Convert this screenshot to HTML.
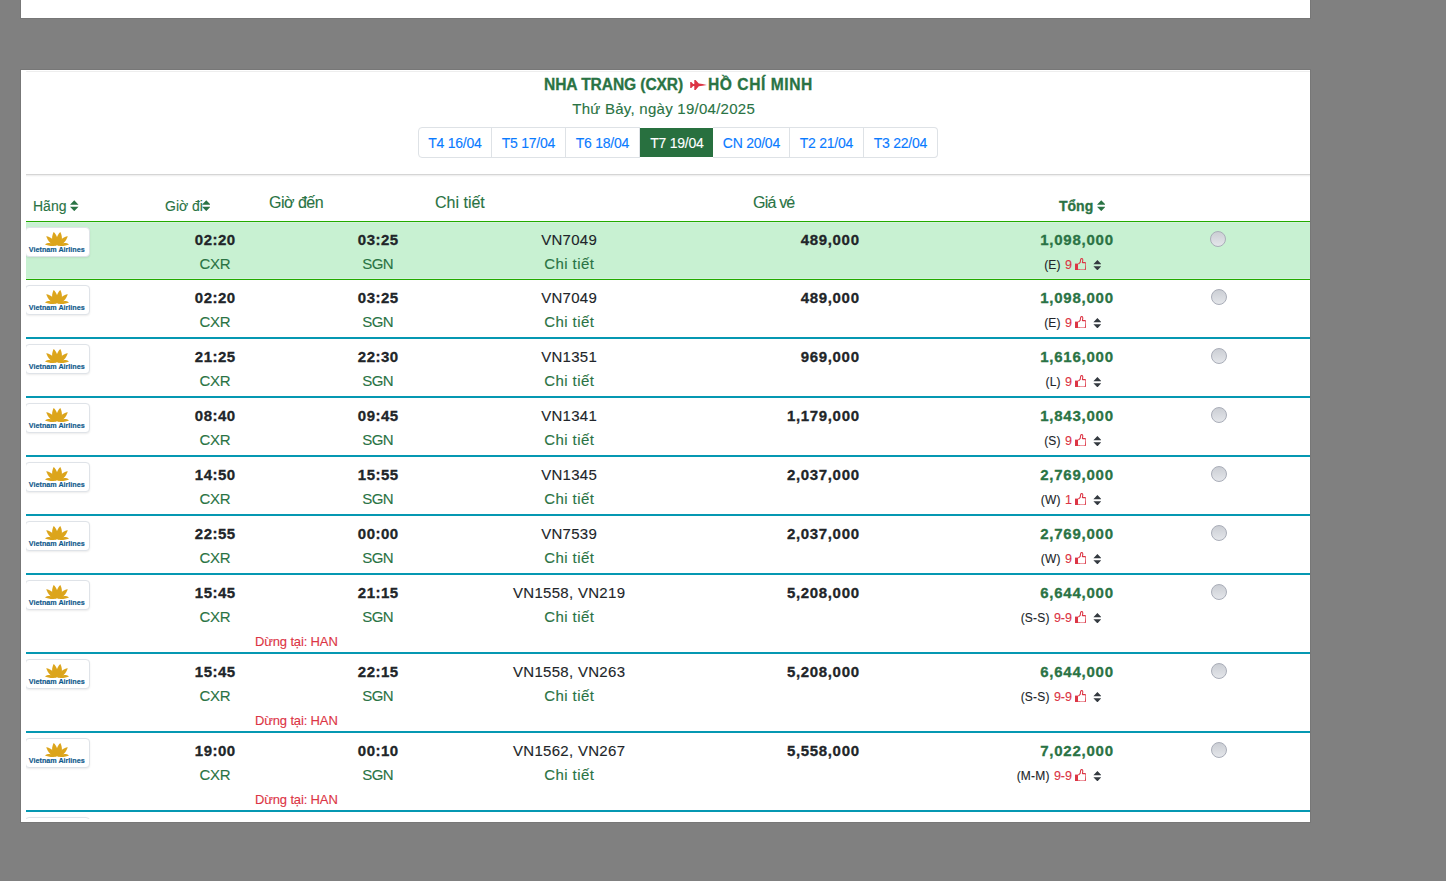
<!DOCTYPE html>
<html><head><meta charset="utf-8"><style>
html,body{margin:0;padding:0}
body{width:1446px;height:881px;background:#808080;position:relative;overflow:hidden;font-family:'Liberation Sans', sans-serif}
.t{position:absolute;white-space:nowrap}
.b{-webkit-text-stroke:0.3px currentColor}
.r{-webkit-text-stroke:0.12px currentColor}
.i{position:absolute;display:block}
.box{position:absolute;background:#fff;box-shadow:0 0 0 1px rgba(0,0,0,.07)}
.clip{position:absolute;left:21px;top:70px;width:1289px;height:752px;overflow:hidden;background:#fff}
.inner{position:absolute;left:-21px;top:-70px;width:1446px;height:881px}
.logo{position:absolute;background:#fff;border:1px solid #dfe3e8;border-radius:4px;box-shadow:0 1px 2px rgba(0,0,0,.08)}
.vna{position:absolute;left:1.3px;top:17.8px;width:59px;text-align:center;font-size:7.2px;line-height:8px;font-weight:bold;color:#0f5a8c;white-space:nowrap;letter-spacing:0px;-webkit-text-stroke:0.15px #0f5a8c}
.radio{position:absolute;width:14px;height:14px;border:1px solid #a9adb8;border-radius:50%;background:linear-gradient(#cbced4,#e4e6ea)}
.tab{position:absolute;top:127px;height:29px;border:1px solid #dee2e6;border-left:none;font-size:14px;line-height:28px;color:#0a7bff;text-align:center;white-space:nowrap}
</style></head><body>
<div class="box" style="left:21px;top:0;width:1289px;height:18px"></div>
<div class="box" style="left:21px;top:70px;width:1289px;height:752px"></div>
<div class="clip"><div class="inner">
<div style="position:absolute;left:26px;top:71px;width:1300px;height:1px;background:#eeeeee;border-radius:2px 0 0 0"></div>
<div style="position:absolute;left:26px;top:174px;width:1300px;height:1px;background:#d5d5d5"></div>
<div style="position:absolute;left:26px;top:175px;width:1300px;height:1px;background:#f0f0f0"></div>
<div style="position:absolute;left:26px;top:176px;width:1300px;height:1px;background:#fafafa"></div>
<div class="t b" style="left:544px;top:74.89px;font-size:15.6px;line-height:19px;color:#2a7344;font-weight:bold;letter-spacing:-0.1px;">NHA TRANG (CXR)</div>
<svg class="i" style="left:690px;top:80px" width="17" height="10" viewBox="0 0 17 10"><path d="M0.2 2 L1.3 2 L3.2 4.1 L4.3 4.1 L4.3 0 L5.6 0 L8.8 3.6 L12.5 4.1 L16.8 4.9 L12.5 5.8 L8.8 6.3 L5.6 10 L4.3 10 L4.3 5.9 L3.2 5.9 L1.3 8 L0.2 8 Z" fill="#dc3545"/></svg>
<div class="t b" style="left:708px;top:74.89px;font-size:15.6px;line-height:19px;color:#2a7344;font-weight:bold;letter-spacing:0.55px;">HỒ CHÍ MINH</div>
<div class="t r" style="left:363.63px;width:600px;text-align:center;top:99.60px;font-size:15px;line-height:18px;color:#2a7344;font-weight:normal;letter-spacing:0.26px;">Thứ Bảy, ngày 19/04/2025</div>
<div class="tab" style="left:418px;width:72px;border-left:1px solid #dee2e6;border-radius:4px 0 0 4px;"></div>
<div class="t r" style="left:154.88px;width:600px;text-align:center;top:134.65px;font-size:14px;line-height:17px;color:#0a7bff;font-weight:normal;letter-spacing:-0.25px;">T4 16/04</div>
<div class="tab" style="left:491px;width:74px;"></div>
<div class="t r" style="left:228.38px;width:600px;text-align:center;top:134.65px;font-size:14px;line-height:17px;color:#0a7bff;font-weight:normal;letter-spacing:-0.25px;">T5 17/04</div>
<div class="tab" style="left:565px;width:74px;"></div>
<div class="t r" style="left:302.38px;width:600px;text-align:center;top:134.65px;font-size:14px;line-height:17px;color:#0a7bff;font-weight:normal;letter-spacing:-0.25px;">T6 18/04</div>
<div class="tab" style="left:639px;width:74px;background:#28703f;border-color:#28703f;color:#fff;top:128px;height:29px;border:none;width:73px;left:640px;line-height:29px"></div>
<div class="t r" style="left:376.88px;width:600px;text-align:center;top:134.65px;font-size:14px;line-height:17px;color:#fff;font-weight:normal;letter-spacing:-0.25px;">T7 19/04</div>
<div class="tab" style="left:713px;width:76px;"></div>
<div class="t r" style="left:451.38px;width:600px;text-align:center;top:134.65px;font-size:14px;line-height:17px;color:#0a7bff;font-weight:normal;letter-spacing:-0.25px;">CN 20/04</div>
<div class="tab" style="left:789px;width:74px;"></div>
<div class="t r" style="left:526.38px;width:600px;text-align:center;top:134.65px;font-size:14px;line-height:17px;color:#0a7bff;font-weight:normal;letter-spacing:-0.25px;">T2 21/04</div>
<div class="tab" style="left:863px;width:74px;border-radius:0 4px 4px 0;"></div>
<div class="t r" style="left:600.38px;width:600px;text-align:center;top:134.65px;font-size:14px;line-height:17px;color:#0a7bff;font-weight:normal;letter-spacing:-0.25px;">T3 22/04</div>
<div class="t r" style="left:33px;top:198.05px;font-size:14px;line-height:17px;color:#2a7344;font-weight:normal;letter-spacing:0px;">Hãng</div>
<svg class="i" style="left:70px;top:200.2px" width="8.5" height="11.3" viewBox="0 0 17 22"><path d="M8.5 0 L17 9 L0 9 Z M0 13 L17 13 L8.5 22 Z" fill="#2a7344"/></svg>
<div class="t r" style="left:165px;top:198.05px;font-size:14px;line-height:17px;color:#2a7344;font-weight:normal;letter-spacing:0px;">Giờ đi</div>
<svg class="i" style="left:201.5px;top:200.2px" width="8.5" height="11.3" viewBox="0 0 17 22"><path d="M8.5 0 L17 9 L0 9 Z M0 13 L17 13 L8.5 22 Z" fill="#2a7344"/></svg>
<div class="t r" style="left:269px;top:192.86px;font-size:16px;line-height:19px;color:#2a7344;font-weight:normal;letter-spacing:-0.5px;">Giờ đến</div>
<div class="t r" style="left:435px;top:192.86px;font-size:16px;line-height:19px;color:#2a7344;font-weight:normal;letter-spacing:0px;">Chi tiết</div>
<div class="t r" style="left:753px;top:192.86px;font-size:16px;line-height:19px;color:#2a7344;font-weight:normal;letter-spacing:-0.8px;">Giá vé</div>
<div class="t b" style="left:1059px;top:198.05px;font-size:14px;line-height:17px;color:#2a7344;font-weight:bold;letter-spacing:0px;">Tổng</div>
<svg class="i" style="left:1096.5px;top:200.2px" width="8.5" height="11.3" viewBox="0 0 17 22"><path d="M8.5 0 L17 9 L0 9 Z M0 13 L17 13 L8.5 22 Z" fill="#2a7344"/></svg>
<div style="position:absolute;left:26px;top:177px;width:1284px;height:642px;overflow:hidden"><div style="position:absolute;left:-26px;top:-177px;width:1446px;height:881px">
<div style="position:absolute;left:26px;top:221px;width:1300px;height:57px;background:#c8f1d2;border-top:1px solid #22aa00;border-bottom:1px solid #22aa00;box-shadow:inset 0 1px 0 rgba(255,255,255,.2), inset 0 -1px 0 rgba(255,255,255,.2)"></div>
<div class="logo" style="left:25px;top:227px;width:63px;height:28px"><svg class="i" style="left:19px;top:4px" width="24" height="14" viewBox="0 0 24 14"><g fill="#dca51c"><path d="M12 13.6 C6.8 12.5 5.8 6 8.6 0 C11.8 2.5 13.8 8 12 13.6Z"/><path d="M12 13.6 C17.2 12.5 18.2 6 15.4 0 C12.2 2.5 10.2 8 12 13.6Z"/><path d="M11 13.6 C6 13.2 3 9 1.2 4.3 C6 5 9.5 8 11 13.6Z"/><path d="M13 13.6 C18 13.2 21 9 22.8 4.3 C18 5 14.5 8 13 13.6Z"/><path d="M11.5 13.8 C6 14.2 2 13.5 0 12.4 C3 10.2 8.5 10.8 11.5 13.8Z"/><path d="M12.5 13.8 C18 14.2 22 13.5 24 12.4 C21 10.2 15.5 10.8 12.5 13.8Z"/></g></svg><div class="vna">Vietnam Airlines</div></div>
<div class="t b" style="left:-84.75px;width:600px;text-align:center;top:230.80px;font-size:15px;line-height:18px;color:#212529;font-weight:bold;letter-spacing:0.5px;">02:20</div>
<div class="t r" style="left:-85.15px;width:600px;text-align:center;top:254.80px;font-size:15px;line-height:18px;color:#2a7344;font-weight:normal;letter-spacing:-0.3px;">CXR</div>
<div class="t b" style="left:78.25px;width:600px;text-align:center;top:230.80px;font-size:15px;line-height:18px;color:#212529;font-weight:bold;letter-spacing:0.5px;">03:25</div>
<div class="t r" style="left:77.70px;width:600px;text-align:center;top:254.80px;font-size:15px;line-height:18px;color:#2a7344;font-weight:normal;letter-spacing:-0.6px;">SGN</div>
<div class="t r" style="left:269.15px;width:600px;text-align:center;top:230.80px;font-size:15px;line-height:18px;color:#212529;font-weight:normal;letter-spacing:0.3px;">VN7049</div>
<div class="t r" style="left:269.21px;width:600px;text-align:center;top:254.80px;font-size:15px;line-height:18px;color:#2a7344;font-weight:normal;letter-spacing:0.43px;">Chi tiết</div>
<div class="t b" style="left:259.67px;width:600px;text-align:right;top:230.80px;font-size:15px;line-height:18px;color:#212529;font-weight:bold;letter-spacing:0.67px;">489,000</div>
<div class="t b" style="left:513.75px;width:600px;text-align:right;top:230.80px;font-size:15px;line-height:18px;color:#2a7344;font-weight:bold;letter-spacing:0.75px;">1,098,000</div>
<svg class="i" style="left:1092.6px;top:259.8px" width="8.8" height="10.4" viewBox="0 0 17 22"><path d="M8.5 0 L17 9 L0 9 Z M0 13 L17 13 L8.5 22 Z" fill="#343a40"/></svg>
<svg class="i" style="left:1074.8px;top:257.8px" width="11.5" height="12.5" viewBox="0 0 11.5 12.5"><path d="M0 5.6 L3 5.6 L3 12 L0 12 Z" fill="#dc3545"/><path d="M3.4 6 L5.2 4.3 L5.6 1.6 Q5.9 0.5 6.8 0.55 Q7.9 0.7 7.8 2.2 L7.4 4.6 L9.8 4.6 Q11 4.7 10.95 6 L10.6 10.8 Q10.4 11.95 9.3 11.95 L4.6 11.95 L3.4 11.3" fill="none" stroke="#dc3545" stroke-width="1.05" stroke-linejoin="round"/></svg>
<div class="t r" style="left:472.00px;width:600px;text-align:right;top:258.17px;font-size:12.5px;line-height:15px;color:#dc3545;font-weight:normal;letter-spacing:0px;"><span style="font-size:12px;letter-spacing:0.2px;color:#212529;margin-right:4.3px">(E)</span>9</div>
<div class="radio" style="left:1210px;top:231px"></div>
<div style="position:absolute;left:26px;top:337px;width:1300px;height:2px;background:#0598b2"></div>
<div class="logo" style="left:25px;top:285px;width:63px;height:28px"><svg class="i" style="left:19px;top:4px" width="24" height="14" viewBox="0 0 24 14"><g fill="#dca51c"><path d="M12 13.6 C6.8 12.5 5.8 6 8.6 0 C11.8 2.5 13.8 8 12 13.6Z"/><path d="M12 13.6 C17.2 12.5 18.2 6 15.4 0 C12.2 2.5 10.2 8 12 13.6Z"/><path d="M11 13.6 C6 13.2 3 9 1.2 4.3 C6 5 9.5 8 11 13.6Z"/><path d="M13 13.6 C18 13.2 21 9 22.8 4.3 C18 5 14.5 8 13 13.6Z"/><path d="M11.5 13.8 C6 14.2 2 13.5 0 12.4 C3 10.2 8.5 10.8 11.5 13.8Z"/><path d="M12.5 13.8 C18 14.2 22 13.5 24 12.4 C21 10.2 15.5 10.8 12.5 13.8Z"/></g></svg><div class="vna">Vietnam Airlines</div></div>
<div class="t b" style="left:-84.75px;width:600px;text-align:center;top:288.80px;font-size:15px;line-height:18px;color:#212529;font-weight:bold;letter-spacing:0.5px;">02:20</div>
<div class="t r" style="left:-85.15px;width:600px;text-align:center;top:312.80px;font-size:15px;line-height:18px;color:#2a7344;font-weight:normal;letter-spacing:-0.3px;">CXR</div>
<div class="t b" style="left:78.25px;width:600px;text-align:center;top:288.80px;font-size:15px;line-height:18px;color:#212529;font-weight:bold;letter-spacing:0.5px;">03:25</div>
<div class="t r" style="left:77.70px;width:600px;text-align:center;top:312.80px;font-size:15px;line-height:18px;color:#2a7344;font-weight:normal;letter-spacing:-0.6px;">SGN</div>
<div class="t r" style="left:269.15px;width:600px;text-align:center;top:288.80px;font-size:15px;line-height:18px;color:#212529;font-weight:normal;letter-spacing:0.3px;">VN7049</div>
<div class="t r" style="left:269.21px;width:600px;text-align:center;top:312.80px;font-size:15px;line-height:18px;color:#2a7344;font-weight:normal;letter-spacing:0.43px;">Chi tiết</div>
<div class="t b" style="left:259.67px;width:600px;text-align:right;top:288.80px;font-size:15px;line-height:18px;color:#212529;font-weight:bold;letter-spacing:0.67px;">489,000</div>
<div class="t b" style="left:513.75px;width:600px;text-align:right;top:288.80px;font-size:15px;line-height:18px;color:#2a7344;font-weight:bold;letter-spacing:0.75px;">1,098,000</div>
<svg class="i" style="left:1092.6px;top:317.8px" width="8.8" height="10.4" viewBox="0 0 17 22"><path d="M8.5 0 L17 9 L0 9 Z M0 13 L17 13 L8.5 22 Z" fill="#343a40"/></svg>
<svg class="i" style="left:1074.8px;top:315.8px" width="11.5" height="12.5" viewBox="0 0 11.5 12.5"><path d="M0 5.6 L3 5.6 L3 12 L0 12 Z" fill="#dc3545"/><path d="M3.4 6 L5.2 4.3 L5.6 1.6 Q5.9 0.5 6.8 0.55 Q7.9 0.7 7.8 2.2 L7.4 4.6 L9.8 4.6 Q11 4.7 10.95 6 L10.6 10.8 Q10.4 11.95 9.3 11.95 L4.6 11.95 L3.4 11.3" fill="none" stroke="#dc3545" stroke-width="1.05" stroke-linejoin="round"/></svg>
<div class="t r" style="left:472.00px;width:600px;text-align:right;top:316.17px;font-size:12.5px;line-height:15px;color:#dc3545;font-weight:normal;letter-spacing:0px;"><span style="font-size:12px;letter-spacing:0.2px;color:#212529;margin-right:4.3px">(E)</span>9</div>
<div class="radio" style="left:1211px;top:289px"></div>
<div style="position:absolute;left:26px;top:396px;width:1300px;height:2px;background:#0598b2"></div>
<div class="logo" style="left:25px;top:344px;width:63px;height:28px"><svg class="i" style="left:19px;top:4px" width="24" height="14" viewBox="0 0 24 14"><g fill="#dca51c"><path d="M12 13.6 C6.8 12.5 5.8 6 8.6 0 C11.8 2.5 13.8 8 12 13.6Z"/><path d="M12 13.6 C17.2 12.5 18.2 6 15.4 0 C12.2 2.5 10.2 8 12 13.6Z"/><path d="M11 13.6 C6 13.2 3 9 1.2 4.3 C6 5 9.5 8 11 13.6Z"/><path d="M13 13.6 C18 13.2 21 9 22.8 4.3 C18 5 14.5 8 13 13.6Z"/><path d="M11.5 13.8 C6 14.2 2 13.5 0 12.4 C3 10.2 8.5 10.8 11.5 13.8Z"/><path d="M12.5 13.8 C18 14.2 22 13.5 24 12.4 C21 10.2 15.5 10.8 12.5 13.8Z"/></g></svg><div class="vna">Vietnam Airlines</div></div>
<div class="t b" style="left:-84.75px;width:600px;text-align:center;top:347.80px;font-size:15px;line-height:18px;color:#212529;font-weight:bold;letter-spacing:0.5px;">21:25</div>
<div class="t r" style="left:-85.15px;width:600px;text-align:center;top:371.80px;font-size:15px;line-height:18px;color:#2a7344;font-weight:normal;letter-spacing:-0.3px;">CXR</div>
<div class="t b" style="left:78.25px;width:600px;text-align:center;top:347.80px;font-size:15px;line-height:18px;color:#212529;font-weight:bold;letter-spacing:0.5px;">22:30</div>
<div class="t r" style="left:77.70px;width:600px;text-align:center;top:371.80px;font-size:15px;line-height:18px;color:#2a7344;font-weight:normal;letter-spacing:-0.6px;">SGN</div>
<div class="t r" style="left:269.15px;width:600px;text-align:center;top:347.80px;font-size:15px;line-height:18px;color:#212529;font-weight:normal;letter-spacing:0.3px;">VN1351</div>
<div class="t r" style="left:269.21px;width:600px;text-align:center;top:371.80px;font-size:15px;line-height:18px;color:#2a7344;font-weight:normal;letter-spacing:0.43px;">Chi tiết</div>
<div class="t b" style="left:259.67px;width:600px;text-align:right;top:347.80px;font-size:15px;line-height:18px;color:#212529;font-weight:bold;letter-spacing:0.67px;">969,000</div>
<div class="t b" style="left:513.75px;width:600px;text-align:right;top:347.80px;font-size:15px;line-height:18px;color:#2a7344;font-weight:bold;letter-spacing:0.75px;">1,616,000</div>
<svg class="i" style="left:1092.6px;top:376.8px" width="8.8" height="10.4" viewBox="0 0 17 22"><path d="M8.5 0 L17 9 L0 9 Z M0 13 L17 13 L8.5 22 Z" fill="#343a40"/></svg>
<svg class="i" style="left:1074.8px;top:374.8px" width="11.5" height="12.5" viewBox="0 0 11.5 12.5"><path d="M0 5.6 L3 5.6 L3 12 L0 12 Z" fill="#dc3545"/><path d="M3.4 6 L5.2 4.3 L5.6 1.6 Q5.9 0.5 6.8 0.55 Q7.9 0.7 7.8 2.2 L7.4 4.6 L9.8 4.6 Q11 4.7 10.95 6 L10.6 10.8 Q10.4 11.95 9.3 11.95 L4.6 11.95 L3.4 11.3" fill="none" stroke="#dc3545" stroke-width="1.05" stroke-linejoin="round"/></svg>
<div class="t r" style="left:472.00px;width:600px;text-align:right;top:375.17px;font-size:12.5px;line-height:15px;color:#dc3545;font-weight:normal;letter-spacing:0px;"><span style="font-size:12px;letter-spacing:0.2px;color:#212529;margin-right:4.3px">(L)</span>9</div>
<div class="radio" style="left:1211px;top:348px"></div>
<div style="position:absolute;left:26px;top:455px;width:1300px;height:2px;background:#0598b2"></div>
<div class="logo" style="left:25px;top:403px;width:63px;height:28px"><svg class="i" style="left:19px;top:4px" width="24" height="14" viewBox="0 0 24 14"><g fill="#dca51c"><path d="M12 13.6 C6.8 12.5 5.8 6 8.6 0 C11.8 2.5 13.8 8 12 13.6Z"/><path d="M12 13.6 C17.2 12.5 18.2 6 15.4 0 C12.2 2.5 10.2 8 12 13.6Z"/><path d="M11 13.6 C6 13.2 3 9 1.2 4.3 C6 5 9.5 8 11 13.6Z"/><path d="M13 13.6 C18 13.2 21 9 22.8 4.3 C18 5 14.5 8 13 13.6Z"/><path d="M11.5 13.8 C6 14.2 2 13.5 0 12.4 C3 10.2 8.5 10.8 11.5 13.8Z"/><path d="M12.5 13.8 C18 14.2 22 13.5 24 12.4 C21 10.2 15.5 10.8 12.5 13.8Z"/></g></svg><div class="vna">Vietnam Airlines</div></div>
<div class="t b" style="left:-84.75px;width:600px;text-align:center;top:406.80px;font-size:15px;line-height:18px;color:#212529;font-weight:bold;letter-spacing:0.5px;">08:40</div>
<div class="t r" style="left:-85.15px;width:600px;text-align:center;top:430.80px;font-size:15px;line-height:18px;color:#2a7344;font-weight:normal;letter-spacing:-0.3px;">CXR</div>
<div class="t b" style="left:78.25px;width:600px;text-align:center;top:406.80px;font-size:15px;line-height:18px;color:#212529;font-weight:bold;letter-spacing:0.5px;">09:45</div>
<div class="t r" style="left:77.70px;width:600px;text-align:center;top:430.80px;font-size:15px;line-height:18px;color:#2a7344;font-weight:normal;letter-spacing:-0.6px;">SGN</div>
<div class="t r" style="left:269.15px;width:600px;text-align:center;top:406.80px;font-size:15px;line-height:18px;color:#212529;font-weight:normal;letter-spacing:0.3px;">VN1341</div>
<div class="t r" style="left:269.21px;width:600px;text-align:center;top:430.80px;font-size:15px;line-height:18px;color:#2a7344;font-weight:normal;letter-spacing:0.43px;">Chi tiết</div>
<div class="t b" style="left:259.67px;width:600px;text-align:right;top:406.80px;font-size:15px;line-height:18px;color:#212529;font-weight:bold;letter-spacing:0.67px;">1,179,000</div>
<div class="t b" style="left:513.75px;width:600px;text-align:right;top:406.80px;font-size:15px;line-height:18px;color:#2a7344;font-weight:bold;letter-spacing:0.75px;">1,843,000</div>
<svg class="i" style="left:1092.6px;top:435.8px" width="8.8" height="10.4" viewBox="0 0 17 22"><path d="M8.5 0 L17 9 L0 9 Z M0 13 L17 13 L8.5 22 Z" fill="#343a40"/></svg>
<svg class="i" style="left:1074.8px;top:433.8px" width="11.5" height="12.5" viewBox="0 0 11.5 12.5"><path d="M0 5.6 L3 5.6 L3 12 L0 12 Z" fill="#dc3545"/><path d="M3.4 6 L5.2 4.3 L5.6 1.6 Q5.9 0.5 6.8 0.55 Q7.9 0.7 7.8 2.2 L7.4 4.6 L9.8 4.6 Q11 4.7 10.95 6 L10.6 10.8 Q10.4 11.95 9.3 11.95 L4.6 11.95 L3.4 11.3" fill="none" stroke="#dc3545" stroke-width="1.05" stroke-linejoin="round"/></svg>
<div class="t r" style="left:472.00px;width:600px;text-align:right;top:434.17px;font-size:12.5px;line-height:15px;color:#dc3545;font-weight:normal;letter-spacing:0px;"><span style="font-size:12px;letter-spacing:0.2px;color:#212529;margin-right:4.3px">(S)</span>9</div>
<div class="radio" style="left:1211px;top:407px"></div>
<div style="position:absolute;left:26px;top:514px;width:1300px;height:2px;background:#0598b2"></div>
<div class="logo" style="left:25px;top:462px;width:63px;height:28px"><svg class="i" style="left:19px;top:4px" width="24" height="14" viewBox="0 0 24 14"><g fill="#dca51c"><path d="M12 13.6 C6.8 12.5 5.8 6 8.6 0 C11.8 2.5 13.8 8 12 13.6Z"/><path d="M12 13.6 C17.2 12.5 18.2 6 15.4 0 C12.2 2.5 10.2 8 12 13.6Z"/><path d="M11 13.6 C6 13.2 3 9 1.2 4.3 C6 5 9.5 8 11 13.6Z"/><path d="M13 13.6 C18 13.2 21 9 22.8 4.3 C18 5 14.5 8 13 13.6Z"/><path d="M11.5 13.8 C6 14.2 2 13.5 0 12.4 C3 10.2 8.5 10.8 11.5 13.8Z"/><path d="M12.5 13.8 C18 14.2 22 13.5 24 12.4 C21 10.2 15.5 10.8 12.5 13.8Z"/></g></svg><div class="vna">Vietnam Airlines</div></div>
<div class="t b" style="left:-84.75px;width:600px;text-align:center;top:465.80px;font-size:15px;line-height:18px;color:#212529;font-weight:bold;letter-spacing:0.5px;">14:50</div>
<div class="t r" style="left:-85.15px;width:600px;text-align:center;top:489.80px;font-size:15px;line-height:18px;color:#2a7344;font-weight:normal;letter-spacing:-0.3px;">CXR</div>
<div class="t b" style="left:78.25px;width:600px;text-align:center;top:465.80px;font-size:15px;line-height:18px;color:#212529;font-weight:bold;letter-spacing:0.5px;">15:55</div>
<div class="t r" style="left:77.70px;width:600px;text-align:center;top:489.80px;font-size:15px;line-height:18px;color:#2a7344;font-weight:normal;letter-spacing:-0.6px;">SGN</div>
<div class="t r" style="left:269.15px;width:600px;text-align:center;top:465.80px;font-size:15px;line-height:18px;color:#212529;font-weight:normal;letter-spacing:0.3px;">VN1345</div>
<div class="t r" style="left:269.21px;width:600px;text-align:center;top:489.80px;font-size:15px;line-height:18px;color:#2a7344;font-weight:normal;letter-spacing:0.43px;">Chi tiết</div>
<div class="t b" style="left:259.67px;width:600px;text-align:right;top:465.80px;font-size:15px;line-height:18px;color:#212529;font-weight:bold;letter-spacing:0.67px;">2,037,000</div>
<div class="t b" style="left:513.75px;width:600px;text-align:right;top:465.80px;font-size:15px;line-height:18px;color:#2a7344;font-weight:bold;letter-spacing:0.75px;">2,769,000</div>
<svg class="i" style="left:1092.6px;top:494.8px" width="8.8" height="10.4" viewBox="0 0 17 22"><path d="M8.5 0 L17 9 L0 9 Z M0 13 L17 13 L8.5 22 Z" fill="#343a40"/></svg>
<svg class="i" style="left:1074.8px;top:492.8px" width="11.5" height="12.5" viewBox="0 0 11.5 12.5"><path d="M0 5.6 L3 5.6 L3 12 L0 12 Z" fill="#dc3545"/><path d="M3.4 6 L5.2 4.3 L5.6 1.6 Q5.9 0.5 6.8 0.55 Q7.9 0.7 7.8 2.2 L7.4 4.6 L9.8 4.6 Q11 4.7 10.95 6 L10.6 10.8 Q10.4 11.95 9.3 11.95 L4.6 11.95 L3.4 11.3" fill="none" stroke="#dc3545" stroke-width="1.05" stroke-linejoin="round"/></svg>
<div class="t r" style="left:472.00px;width:600px;text-align:right;top:493.17px;font-size:12.5px;line-height:15px;color:#dc3545;font-weight:normal;letter-spacing:0px;"><span style="font-size:12px;letter-spacing:0.2px;color:#212529;margin-right:4.3px">(W)</span>1</div>
<div class="radio" style="left:1211px;top:466px"></div>
<div style="position:absolute;left:26px;top:573px;width:1300px;height:2px;background:#0598b2"></div>
<div class="logo" style="left:25px;top:521px;width:63px;height:28px"><svg class="i" style="left:19px;top:4px" width="24" height="14" viewBox="0 0 24 14"><g fill="#dca51c"><path d="M12 13.6 C6.8 12.5 5.8 6 8.6 0 C11.8 2.5 13.8 8 12 13.6Z"/><path d="M12 13.6 C17.2 12.5 18.2 6 15.4 0 C12.2 2.5 10.2 8 12 13.6Z"/><path d="M11 13.6 C6 13.2 3 9 1.2 4.3 C6 5 9.5 8 11 13.6Z"/><path d="M13 13.6 C18 13.2 21 9 22.8 4.3 C18 5 14.5 8 13 13.6Z"/><path d="M11.5 13.8 C6 14.2 2 13.5 0 12.4 C3 10.2 8.5 10.8 11.5 13.8Z"/><path d="M12.5 13.8 C18 14.2 22 13.5 24 12.4 C21 10.2 15.5 10.8 12.5 13.8Z"/></g></svg><div class="vna">Vietnam Airlines</div></div>
<div class="t b" style="left:-84.75px;width:600px;text-align:center;top:524.80px;font-size:15px;line-height:18px;color:#212529;font-weight:bold;letter-spacing:0.5px;">22:55</div>
<div class="t r" style="left:-85.15px;width:600px;text-align:center;top:548.80px;font-size:15px;line-height:18px;color:#2a7344;font-weight:normal;letter-spacing:-0.3px;">CXR</div>
<div class="t b" style="left:78.25px;width:600px;text-align:center;top:524.80px;font-size:15px;line-height:18px;color:#212529;font-weight:bold;letter-spacing:0.5px;">00:00</div>
<div class="t r" style="left:77.70px;width:600px;text-align:center;top:548.80px;font-size:15px;line-height:18px;color:#2a7344;font-weight:normal;letter-spacing:-0.6px;">SGN</div>
<div class="t r" style="left:269.15px;width:600px;text-align:center;top:524.80px;font-size:15px;line-height:18px;color:#212529;font-weight:normal;letter-spacing:0.3px;">VN7539</div>
<div class="t r" style="left:269.21px;width:600px;text-align:center;top:548.80px;font-size:15px;line-height:18px;color:#2a7344;font-weight:normal;letter-spacing:0.43px;">Chi tiết</div>
<div class="t b" style="left:259.67px;width:600px;text-align:right;top:524.80px;font-size:15px;line-height:18px;color:#212529;font-weight:bold;letter-spacing:0.67px;">2,037,000</div>
<div class="t b" style="left:513.75px;width:600px;text-align:right;top:524.80px;font-size:15px;line-height:18px;color:#2a7344;font-weight:bold;letter-spacing:0.75px;">2,769,000</div>
<svg class="i" style="left:1092.6px;top:553.8px" width="8.8" height="10.4" viewBox="0 0 17 22"><path d="M8.5 0 L17 9 L0 9 Z M0 13 L17 13 L8.5 22 Z" fill="#343a40"/></svg>
<svg class="i" style="left:1074.8px;top:551.8px" width="11.5" height="12.5" viewBox="0 0 11.5 12.5"><path d="M0 5.6 L3 5.6 L3 12 L0 12 Z" fill="#dc3545"/><path d="M3.4 6 L5.2 4.3 L5.6 1.6 Q5.9 0.5 6.8 0.55 Q7.9 0.7 7.8 2.2 L7.4 4.6 L9.8 4.6 Q11 4.7 10.95 6 L10.6 10.8 Q10.4 11.95 9.3 11.95 L4.6 11.95 L3.4 11.3" fill="none" stroke="#dc3545" stroke-width="1.05" stroke-linejoin="round"/></svg>
<div class="t r" style="left:472.00px;width:600px;text-align:right;top:552.17px;font-size:12.5px;line-height:15px;color:#dc3545;font-weight:normal;letter-spacing:0px;"><span style="font-size:12px;letter-spacing:0.2px;color:#212529;margin-right:4.3px">(W)</span>9</div>
<div class="radio" style="left:1211px;top:525px"></div>
<div style="position:absolute;left:26px;top:652px;width:1300px;height:2px;background:#0598b2"></div>
<div class="logo" style="left:25px;top:580px;width:63px;height:28px"><svg class="i" style="left:19px;top:4px" width="24" height="14" viewBox="0 0 24 14"><g fill="#dca51c"><path d="M12 13.6 C6.8 12.5 5.8 6 8.6 0 C11.8 2.5 13.8 8 12 13.6Z"/><path d="M12 13.6 C17.2 12.5 18.2 6 15.4 0 C12.2 2.5 10.2 8 12 13.6Z"/><path d="M11 13.6 C6 13.2 3 9 1.2 4.3 C6 5 9.5 8 11 13.6Z"/><path d="M13 13.6 C18 13.2 21 9 22.8 4.3 C18 5 14.5 8 13 13.6Z"/><path d="M11.5 13.8 C6 14.2 2 13.5 0 12.4 C3 10.2 8.5 10.8 11.5 13.8Z"/><path d="M12.5 13.8 C18 14.2 22 13.5 24 12.4 C21 10.2 15.5 10.8 12.5 13.8Z"/></g></svg><div class="vna">Vietnam Airlines</div></div>
<div class="t b" style="left:-84.75px;width:600px;text-align:center;top:583.80px;font-size:15px;line-height:18px;color:#212529;font-weight:bold;letter-spacing:0.5px;">15:45</div>
<div class="t r" style="left:-85.15px;width:600px;text-align:center;top:607.80px;font-size:15px;line-height:18px;color:#2a7344;font-weight:normal;letter-spacing:-0.3px;">CXR</div>
<div class="t b" style="left:78.25px;width:600px;text-align:center;top:583.80px;font-size:15px;line-height:18px;color:#212529;font-weight:bold;letter-spacing:0.5px;">21:15</div>
<div class="t r" style="left:77.70px;width:600px;text-align:center;top:607.80px;font-size:15px;line-height:18px;color:#2a7344;font-weight:normal;letter-spacing:-0.6px;">SGN</div>
<div class="t r" style="left:269.15px;width:600px;text-align:center;top:583.80px;font-size:15px;line-height:18px;color:#212529;font-weight:normal;letter-spacing:0.3px;">VN1558, VN219</div>
<div class="t r" style="left:269.21px;width:600px;text-align:center;top:607.80px;font-size:15px;line-height:18px;color:#2a7344;font-weight:normal;letter-spacing:0.43px;">Chi tiết</div>
<div class="t b" style="left:259.67px;width:600px;text-align:right;top:583.80px;font-size:15px;line-height:18px;color:#212529;font-weight:bold;letter-spacing:0.67px;">5,208,000</div>
<div class="t b" style="left:513.75px;width:600px;text-align:right;top:583.80px;font-size:15px;line-height:18px;color:#2a7344;font-weight:bold;letter-spacing:0.75px;">6,644,000</div>
<svg class="i" style="left:1092.6px;top:612.8px" width="8.8" height="10.4" viewBox="0 0 17 22"><path d="M8.5 0 L17 9 L0 9 Z M0 13 L17 13 L8.5 22 Z" fill="#343a40"/></svg>
<svg class="i" style="left:1074.8px;top:610.8px" width="11.5" height="12.5" viewBox="0 0 11.5 12.5"><path d="M0 5.6 L3 5.6 L3 12 L0 12 Z" fill="#dc3545"/><path d="M3.4 6 L5.2 4.3 L5.6 1.6 Q5.9 0.5 6.8 0.55 Q7.9 0.7 7.8 2.2 L7.4 4.6 L9.8 4.6 Q11 4.7 10.95 6 L10.6 10.8 Q10.4 11.95 9.3 11.95 L4.6 11.95 L3.4 11.3" fill="none" stroke="#dc3545" stroke-width="1.05" stroke-linejoin="round"/></svg>
<div class="t r" style="left:472.00px;width:600px;text-align:right;top:611.17px;font-size:12.5px;line-height:15px;color:#dc3545;font-weight:normal;letter-spacing:0px;"><span style="font-size:12px;letter-spacing:0.2px;color:#212529;margin-right:4.3px">(S-S)</span>9-9</div>
<div class="radio" style="left:1211px;top:584px"></div>
<div class="t r" style="left:255px;top:634.00px;font-size:13px;line-height:16px;color:#dc3545;font-weight:normal;letter-spacing:-0.15px;">Dừng tại: HAN</div>
<div style="position:absolute;left:26px;top:731px;width:1300px;height:2px;background:#0598b2"></div>
<div class="logo" style="left:25px;top:659px;width:63px;height:28px"><svg class="i" style="left:19px;top:4px" width="24" height="14" viewBox="0 0 24 14"><g fill="#dca51c"><path d="M12 13.6 C6.8 12.5 5.8 6 8.6 0 C11.8 2.5 13.8 8 12 13.6Z"/><path d="M12 13.6 C17.2 12.5 18.2 6 15.4 0 C12.2 2.5 10.2 8 12 13.6Z"/><path d="M11 13.6 C6 13.2 3 9 1.2 4.3 C6 5 9.5 8 11 13.6Z"/><path d="M13 13.6 C18 13.2 21 9 22.8 4.3 C18 5 14.5 8 13 13.6Z"/><path d="M11.5 13.8 C6 14.2 2 13.5 0 12.4 C3 10.2 8.5 10.8 11.5 13.8Z"/><path d="M12.5 13.8 C18 14.2 22 13.5 24 12.4 C21 10.2 15.5 10.8 12.5 13.8Z"/></g></svg><div class="vna">Vietnam Airlines</div></div>
<div class="t b" style="left:-84.75px;width:600px;text-align:center;top:662.80px;font-size:15px;line-height:18px;color:#212529;font-weight:bold;letter-spacing:0.5px;">15:45</div>
<div class="t r" style="left:-85.15px;width:600px;text-align:center;top:686.80px;font-size:15px;line-height:18px;color:#2a7344;font-weight:normal;letter-spacing:-0.3px;">CXR</div>
<div class="t b" style="left:78.25px;width:600px;text-align:center;top:662.80px;font-size:15px;line-height:18px;color:#212529;font-weight:bold;letter-spacing:0.5px;">22:15</div>
<div class="t r" style="left:77.70px;width:600px;text-align:center;top:686.80px;font-size:15px;line-height:18px;color:#2a7344;font-weight:normal;letter-spacing:-0.6px;">SGN</div>
<div class="t r" style="left:269.15px;width:600px;text-align:center;top:662.80px;font-size:15px;line-height:18px;color:#212529;font-weight:normal;letter-spacing:0.3px;">VN1558, VN263</div>
<div class="t r" style="left:269.21px;width:600px;text-align:center;top:686.80px;font-size:15px;line-height:18px;color:#2a7344;font-weight:normal;letter-spacing:0.43px;">Chi tiết</div>
<div class="t b" style="left:259.67px;width:600px;text-align:right;top:662.80px;font-size:15px;line-height:18px;color:#212529;font-weight:bold;letter-spacing:0.67px;">5,208,000</div>
<div class="t b" style="left:513.75px;width:600px;text-align:right;top:662.80px;font-size:15px;line-height:18px;color:#2a7344;font-weight:bold;letter-spacing:0.75px;">6,644,000</div>
<svg class="i" style="left:1092.6px;top:691.8px" width="8.8" height="10.4" viewBox="0 0 17 22"><path d="M8.5 0 L17 9 L0 9 Z M0 13 L17 13 L8.5 22 Z" fill="#343a40"/></svg>
<svg class="i" style="left:1074.8px;top:689.8px" width="11.5" height="12.5" viewBox="0 0 11.5 12.5"><path d="M0 5.6 L3 5.6 L3 12 L0 12 Z" fill="#dc3545"/><path d="M3.4 6 L5.2 4.3 L5.6 1.6 Q5.9 0.5 6.8 0.55 Q7.9 0.7 7.8 2.2 L7.4 4.6 L9.8 4.6 Q11 4.7 10.95 6 L10.6 10.8 Q10.4 11.95 9.3 11.95 L4.6 11.95 L3.4 11.3" fill="none" stroke="#dc3545" stroke-width="1.05" stroke-linejoin="round"/></svg>
<div class="t r" style="left:472.00px;width:600px;text-align:right;top:690.17px;font-size:12.5px;line-height:15px;color:#dc3545;font-weight:normal;letter-spacing:0px;"><span style="font-size:12px;letter-spacing:0.2px;color:#212529;margin-right:4.3px">(S-S)</span>9-9</div>
<div class="radio" style="left:1211px;top:663px"></div>
<div class="t r" style="left:255px;top:713.00px;font-size:13px;line-height:16px;color:#dc3545;font-weight:normal;letter-spacing:-0.15px;">Dừng tại: HAN</div>
<div style="position:absolute;left:26px;top:810px;width:1300px;height:2px;background:#0598b2"></div>
<div class="logo" style="left:25px;top:738px;width:63px;height:28px"><svg class="i" style="left:19px;top:4px" width="24" height="14" viewBox="0 0 24 14"><g fill="#dca51c"><path d="M12 13.6 C6.8 12.5 5.8 6 8.6 0 C11.8 2.5 13.8 8 12 13.6Z"/><path d="M12 13.6 C17.2 12.5 18.2 6 15.4 0 C12.2 2.5 10.2 8 12 13.6Z"/><path d="M11 13.6 C6 13.2 3 9 1.2 4.3 C6 5 9.5 8 11 13.6Z"/><path d="M13 13.6 C18 13.2 21 9 22.8 4.3 C18 5 14.5 8 13 13.6Z"/><path d="M11.5 13.8 C6 14.2 2 13.5 0 12.4 C3 10.2 8.5 10.8 11.5 13.8Z"/><path d="M12.5 13.8 C18 14.2 22 13.5 24 12.4 C21 10.2 15.5 10.8 12.5 13.8Z"/></g></svg><div class="vna">Vietnam Airlines</div></div>
<div class="t b" style="left:-84.75px;width:600px;text-align:center;top:741.80px;font-size:15px;line-height:18px;color:#212529;font-weight:bold;letter-spacing:0.5px;">19:00</div>
<div class="t r" style="left:-85.15px;width:600px;text-align:center;top:765.80px;font-size:15px;line-height:18px;color:#2a7344;font-weight:normal;letter-spacing:-0.3px;">CXR</div>
<div class="t b" style="left:78.25px;width:600px;text-align:center;top:741.80px;font-size:15px;line-height:18px;color:#212529;font-weight:bold;letter-spacing:0.5px;">00:10</div>
<div class="t r" style="left:77.70px;width:600px;text-align:center;top:765.80px;font-size:15px;line-height:18px;color:#2a7344;font-weight:normal;letter-spacing:-0.6px;">SGN</div>
<div class="t r" style="left:269.15px;width:600px;text-align:center;top:741.80px;font-size:15px;line-height:18px;color:#212529;font-weight:normal;letter-spacing:0.3px;">VN1562, VN267</div>
<div class="t r" style="left:269.21px;width:600px;text-align:center;top:765.80px;font-size:15px;line-height:18px;color:#2a7344;font-weight:normal;letter-spacing:0.43px;">Chi tiết</div>
<div class="t b" style="left:259.67px;width:600px;text-align:right;top:741.80px;font-size:15px;line-height:18px;color:#212529;font-weight:bold;letter-spacing:0.67px;">5,558,000</div>
<div class="t b" style="left:513.75px;width:600px;text-align:right;top:741.80px;font-size:15px;line-height:18px;color:#2a7344;font-weight:bold;letter-spacing:0.75px;">7,022,000</div>
<svg class="i" style="left:1092.6px;top:770.8px" width="8.8" height="10.4" viewBox="0 0 17 22"><path d="M8.5 0 L17 9 L0 9 Z M0 13 L17 13 L8.5 22 Z" fill="#343a40"/></svg>
<svg class="i" style="left:1074.8px;top:768.8px" width="11.5" height="12.5" viewBox="0 0 11.5 12.5"><path d="M0 5.6 L3 5.6 L3 12 L0 12 Z" fill="#dc3545"/><path d="M3.4 6 L5.2 4.3 L5.6 1.6 Q5.9 0.5 6.8 0.55 Q7.9 0.7 7.8 2.2 L7.4 4.6 L9.8 4.6 Q11 4.7 10.95 6 L10.6 10.8 Q10.4 11.95 9.3 11.95 L4.6 11.95 L3.4 11.3" fill="none" stroke="#dc3545" stroke-width="1.05" stroke-linejoin="round"/></svg>
<div class="t r" style="left:472.00px;width:600px;text-align:right;top:769.17px;font-size:12.5px;line-height:15px;color:#dc3545;font-weight:normal;letter-spacing:0px;"><span style="font-size:12px;letter-spacing:0.2px;color:#212529;margin-right:4.3px">(M-M)</span>9-9</div>
<div class="radio" style="left:1211px;top:742px"></div>
<div class="t r" style="left:255px;top:792.00px;font-size:13px;line-height:16px;color:#dc3545;font-weight:normal;letter-spacing:-0.15px;">Dừng tại: HAN</div>
<div class="logo" style="left:25px;top:817px;width:63px;height:28px"><svg class="i" style="left:19px;top:4px" width="24" height="14" viewBox="0 0 24 14"><g fill="#dca51c"><path d="M12 13.6 C6.8 12.5 5.8 6 8.6 0 C11.8 2.5 13.8 8 12 13.6Z"/><path d="M12 13.6 C17.2 12.5 18.2 6 15.4 0 C12.2 2.5 10.2 8 12 13.6Z"/><path d="M11 13.6 C6 13.2 3 9 1.2 4.3 C6 5 9.5 8 11 13.6Z"/><path d="M13 13.6 C18 13.2 21 9 22.8 4.3 C18 5 14.5 8 13 13.6Z"/><path d="M11.5 13.8 C6 14.2 2 13.5 0 12.4 C3 10.2 8.5 10.8 11.5 13.8Z"/><path d="M12.5 13.8 C18 14.2 22 13.5 24 12.4 C21 10.2 15.5 10.8 12.5 13.8Z"/></g></svg><div class="vna">Vietnam Airlines</div></div>
</div></div>
</div></div>
</body></html>
